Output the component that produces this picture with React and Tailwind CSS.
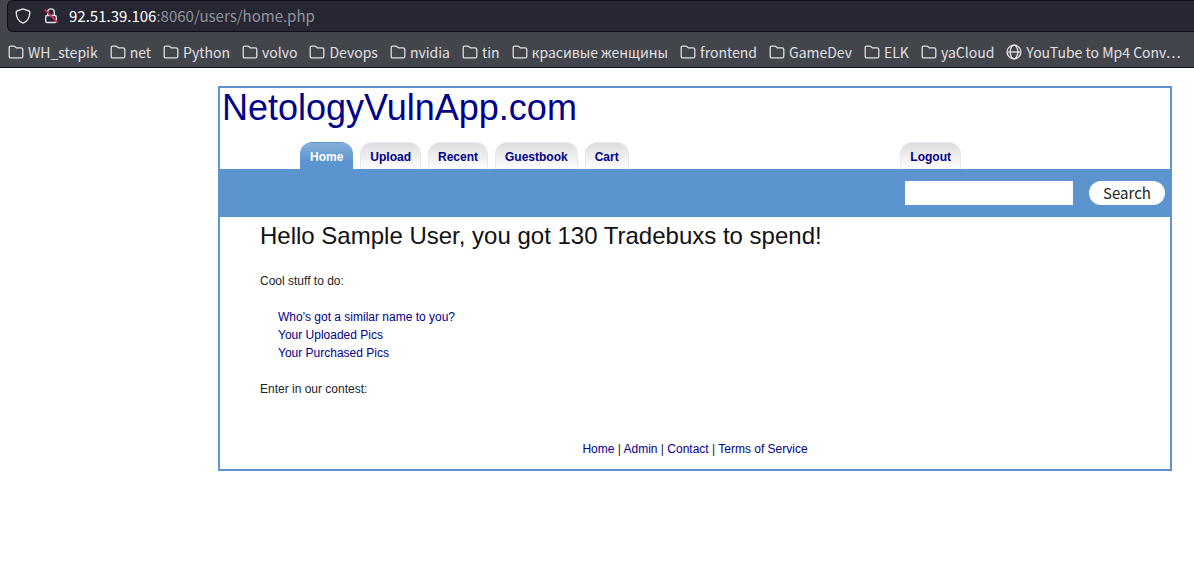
const folders = ["WH_stepik", "net", "Python", "volvo", "Devops", "nvidia", "tin", "красивые женщины", "frontend", "GameDev", "ELK", "yaCloud"];
const tabs = ["Home", "Upload", "Recent", "Guestbook", "Cart"];
const footerLinks = ["Home", "Admin", "Contact", "Terms of Service"];

function FolderIcon() {
  return (
    <svg className="h-4 w-4 shrink-0" viewBox="0 0 16 16" fill="none" stroke="currentColor" strokeWidth="1.3" strokeLinejoin="round" aria-hidden="true">
      <path d="M1.2 3.6c0-.9.6-1.5 1.5-1.5h3.1c.4 0 .7.1 1 .4L8.200 3.800h4.900c1 0 1.700.6 1.700 1.600v7c0 .9-.6 1.500-1.500 1.500H2.700c-.9 0-1.500-.6-1.500-1.500z" />
    </svg>
  );
}

function GlobeIcon() {
  return (
    <svg className="h-4 w-4 shrink-0" viewBox="0 0 16 16" fill="none" stroke="currentColor" strokeWidth="1.4" aria-hidden="true">
      <circle cx="8" cy="8" r="6.9" />
      <ellipse cx="8" cy="8" rx="3.8" ry="6.9" />
      <path d="M1.2 8h13.6" />
    </svg>
  );
}

function ShieldIcon() {
  return (
    <svg className="h-4 w-4" viewBox="0 0 16 16" fill="none" stroke="currentColor" strokeWidth="1.4" strokeLinejoin="round" aria-hidden="true">
      <path d="M8 .9 14 3c.5.2.8.6.8 1.100 0 5.200-2.200 9.400-6.800 11.100C3.400 13.500 1.200 9.300 1.200 4.100c0-.5.3-.9.8-1.100z" />
    </svg>
  );
}

function InsecureIcon() {
  return (
    <svg className="h-4 w-4" viewBox="0 0 16 16" fill="none" stroke="currentColor" strokeWidth="1.4" aria-hidden="true">
      <path d="M4.7 7.5V4.200a3.300 3.300 0 0 1 6.600 0v3.300" />
      <rect x="2.7" y="7.5" width="10.6" height="7" rx="1.5" />
      <path d="m1.500 1.500 13 13" stroke="#e22850" strokeWidth="1.7" />
    </svg>
  );
}

function Tab({ label, active }) {
  const look = active
    ? "border-transparent bg-linear-to-b from-[#86afd9] to-[#5c94d0] to-70% text-white"
    : "border-[#e8e8ee] bg-linear-to-b from-[#dddddf] to-white text-[#00008b]";
  return (
    <a href="#" className={"flex h-[27px] items-center rounded-t-xl border border-b-0 px-[9px] pt-0.5 text-xs font-bold " + look}>
      {label}
    </a>
  );
}

export default function App() {
  return (
    <div className="min-h-screen bg-white font-['Liberation_Sans',Arial,sans-serif]">
      <header className="bg-[#43454c] font-['Noto_Sans_CJK_SC','Noto_Sans',sans-serif] text-[#e0e0e3]">
        <div className="pl-[7px]">
          <div className="flex h-8 items-center gap-2.5 rounded-l-md border border-r-0 border-[#0e0f1c] bg-[#262733] px-[7px]">
            <div className="flex gap-3">
              <ShieldIcon />
              <InsecureIcon />
            </div>
            <p className="text-[15px] leading-5 text-[#94949c]"><span className="text-white">92.51.39.106</span>:8060/users/home.php</p>
          </div>
        </div>
        <nav aria-label="Bookmarks" className="flex h-9 items-center gap-3 overflow-hidden border-b border-[#0e0f1c] px-2 pt-1 text-sm whitespace-nowrap">
          {folders.map((name) => (
            <button key={name} type="button" className="flex items-center gap-1"><FolderIcon />{name}</button>
          ))}
          <a href="#" className="flex items-center gap-1"><GlobeIcon />YouTube to Mp4 Conv…</a>
        </nav>
      </header>

      <div className="mt-[18px] mr-[22px] ml-[218px] border-2 border-[#5c94d0] text-xs leading-[18px] text-[#222]">
        <div className="px-0.5">
          <h1 className="text-4xl leading-10 text-[#00008b]"><a href="#">NetologyVulnApp.com</a></h1>
        </div>
        <nav aria-label="Main" className="mt-3.5 flex justify-between pr-[209px] pl-20">
          <div className="flex gap-[7px]">
            {tabs.map((label) => <Tab key={label} label={label} active={label === "Home"} />)}
          </div>
          <Tab label="Logout" />
        </nav>
        <form className="flex h-12 items-center justify-end gap-4 bg-[#5c94d0] pr-[5px]">
          <input type="text" aria-label="Search pictures" className="h-6 w-[168px] bg-white px-1 text-black outline-none" />
          <button type="button" className="h-6 w-[76px] rounded-full bg-white font-['Noto_Sans_CJK_SC','Noto_Sans',sans-serif] text-[15px] leading-6 text-[#222]">Search</button>
        </form>
        <main className="px-10">
          <h2 className="pt-1 text-2xl leading-[30px] text-[#111]">Hello Sample User, you got 130 Tradebuxs to spend!</h2>
          <p className="mt-[21px]">Cool stuff to do:</p>
          <ul className="my-[18px] pl-[18px] text-[#00008b]">
            <li><a href="#">Who's got a similar name to you?</a></li>
            <li><a href="#">Your Uploaded Pics</a></li>
            <li><a href="#">Your Purchased Pics</a></li>
          </ul>
          <p>Enter in our contest:</p>
        </main>
        <footer className="mt-[42px] pb-[11px] text-center">
          {footerLinks.map((label, i) => (
            <span key={label}>{i > 0 && " | "}<a href="#" className="text-[#00008b]">{label}</a></span>
          ))}
        </footer>
      </div>
    </div>
  );
}
